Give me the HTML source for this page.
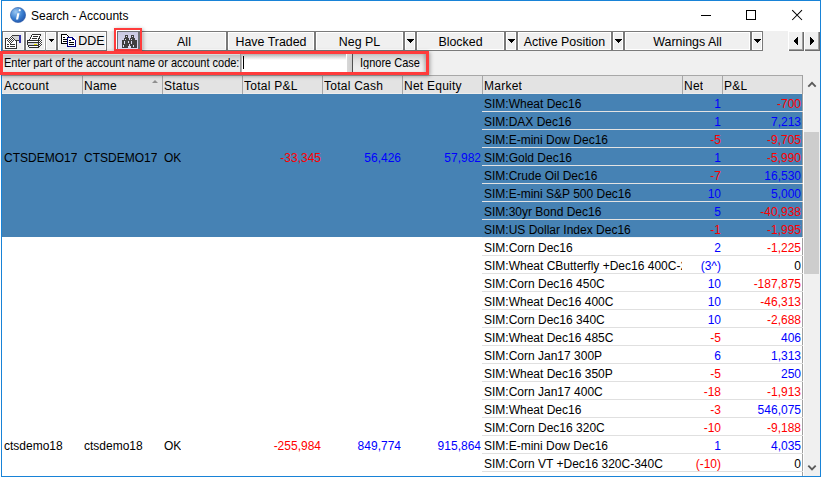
<!DOCTYPE html>
<html><head><meta charset="utf-8"><title>Search - Accounts</title>
<style>
*{margin:0;padding:0;box-sizing:border-box}
html,body{width:821px;height:477px;overflow:hidden;background:#fff;font-family:"Liberation Sans",sans-serif;font-size:12px;color:#000}
.a{position:absolute}
.sel{background:#4682b4}
.hl{left:482px;width:321px;height:1px}
.t{height:17px;line-height:17px;white-space:nowrap;overflow:hidden}
.mk{left:484px;width:198px}
.nt{left:682px;width:39px}
.pl{left:722px;width:79px}
.ra{text-align:right}
.b{color:#0000ff}
.r{color:#ff0000}
.k{color:#000}
.win{left:1px;top:0;width:820px;height:477px;border:1px solid #1883d7;background:#f0f0f0}
.title{left:2px;top:1px;width:818px;height:30px;background:#fff}
.tb{top:31px;height:20px;background:#f0f0f0;border:1px solid #7a7a7a;box-shadow:inset 0 0 0 1px #fff}
.tbt{top:33px;height:18px;line-height:18px;text-align:center;font-size:12.4px}
.arr{width:0;height:0;border-left:3.5px solid transparent;border-right:3.5px solid transparent;border-top:4px solid #000}
.arr5{width:0;height:0;border-left:2.5px solid transparent;border-right:2.5px solid transparent;border-top:3px solid #000}
.sb3{top:31px;height:20px;background:#f0f0f0;box-shadow:inset 1px 1px 0 #fff,inset -1px -1px 0 #6d6d6d,inset -2px -2px 0 #a0a0a0}
.hdr{top:75px;height:19px;background:linear-gradient(#a8a8a8 0,#a8a8a8 1px,#e3e3e3 1px,#e3e3e3 18px,#ededed 18px)}
.hs{top:76px;width:1px;height:18px;background:#a6a6a6}
.ht{top:78px;height:15px;line-height:17px;letter-spacing:0.25px;white-space:nowrap;overflow:hidden}

</style></head><body>
<div class="a win"></div>
<div class="a title"></div>
<!-- title icon -->
<svg class="a" style="left:10px;top:7px" width="16" height="16" viewBox="0 0 16 16">
<defs><radialGradient id="ig" cx="0.35" cy="0.3" r="0.8"><stop offset="0" stop-color="#9cc8f2"/><stop offset="0.55" stop-color="#3a7fd0"/><stop offset="1" stop-color="#1f4fa6"/></radialGradient></defs>
<circle cx="8" cy="8" r="7.6" fill="url(#ig)" stroke="#2a5aa8" stroke-width="0.6"/>
<path d="M8.6 3.2a1.1 1.1 0 1 1 0 .01z" fill="#fff"/>
<path d="M7.3 6.2h2.2l-1.4 6.4h-2.1z" fill="#fff"/>
</svg>
<div class="a" style="left:31px;top:8px;height:16px;line-height:16px;font-size:12px;color:#000">Search - Accounts</div>
<!-- caption buttons -->
<div class="a" style="left:701px;top:15px;width:10px;height:1px;background:#000"></div>
<div class="a" style="left:746px;top:10px;width:10px;height:10px;border:1px solid #000"></div>
<svg class="a" style="left:791px;top:9px" width="13" height="13" viewBox="0 0 13 13"><path d="M1.2 1.2L11 11M11 1.2L1.2 11" stroke="#000" stroke-width="1.05"/></svg>

<div class="a tb" style="left:2px;width:23px"></div>
<svg class="a" style="left:2px;top:31px" width="24" height="20" viewBox="0 0 24 20" shape-rendering="crispEdges">
<defs><pattern id="ck" width="2" height="2" patternUnits="userSpaceOnUse"><rect width="2" height="2" fill="#fff"/><rect width="1" height="1" fill="#3a3a3a"/><rect x="1" y="1" width="1" height="1" fill="#3a3a3a"/></pattern></defs>
<rect x="3" y="7" width="12" height="11" fill="#333"/>
<rect x="4" y="8" width="10" height="9" fill="#fff"/>
<rect x="5" y="13" width="2" height="1" fill="#333"/><rect x="8" y="13" width="5" height="1" fill="#333"/>
<rect x="5" y="15" width="2" height="1" fill="#333"/><rect x="8" y="15" width="5" height="1" fill="#333"/>
<rect x="10" y="4" width="7" height="6" fill="#3a3a3a"/>
<rect x="10" y="5" width="7" height="4" fill="#d4d4d4"/>
<polygon points="4,10 9,4 13,9 9,13" fill="url(#ck)"/>
<rect x="17" y="4" width="2" height="8" fill="#3434a8"/>
</svg>
<div class="a tb" style="left:25px;width:21px"></div>
<div class="a tb" style="left:45px;width:12px;border-left-color:#999"></div>
<svg class="a" style="left:25px;top:32px" width="20" height="18" viewBox="0 0 20 18" shape-rendering="crispEdges">
<polygon points="7,3 15,3 13,8 4,8" fill="#fff"/>
<rect x="3" y="9" width="10" height="1" fill="#fff"/>
<rect x="3" y="11" width="10" height="2" fill="#d6d6dc"/>
<rect x="4" y="14" width="9" height="1" fill="#fff"/>
<polygon points="14,5 17,8 17,13 14,15" fill="url(#ck)"/>
<g fill="#2e2e2e">
<rect x="7" y="2" width="9" height="1"/>
<rect x="6" y="3" width="1" height="2"/><rect x="15" y="3" width="1" height="1"/>
<rect x="14" y="4" width="1" height="2"/>
<rect x="5" y="5" width="1" height="2"/><rect x="13" y="6" width="1" height="2"/>
<rect x="4" y="7" width="1" height="1"/>
<rect x="8" y="4" width="5" height="1"/><rect x="7" y="6" width="5" height="1"/>
<rect x="2" y="8" width="12" height="1"/>
<rect x="2" y="9" width="1" height="2"/><rect x="13" y="9" width="1" height="1"/>
<rect x="2" y="10" width="12" height="1"/>
<rect x="2" y="11" width="1" height="2"/><rect x="13" y="11" width="1" height="2"/>
<rect x="3" y="13" width="11" height="1"/>
<rect x="3" y="14" width="1" height="1"/><rect x="13" y="14" width="2" height="1"/>
<rect x="4" y="15" width="10" height="1"/>
</g>
<rect x="9" y="12" width="3" height="1" fill="#eee600"/>
</svg>
<svg class="a" style="left:49px;top:39px" width="5" height="3" shape-rendering="crispEdges"><rect x="0" y="0" width="5" height="1"/><rect x="1" y="1" width="3" height="1"/><rect x="2" y="2" width="1" height="1"/></svg>
<div class="a tb" style="left:57px;width:50px"></div>
<svg class="a" style="left:58px;top:32px" width="20" height="18" viewBox="0 0 20 18" shape-rendering="crispEdges">
<rect x="3" y="2" width="7" height="10" fill="#fff"/>
<g fill="#000">
<rect x="3" y="2" width="6" height="1"/><rect x="3" y="2" width="1" height="10"/><rect x="3" y="11" width="7" height="1"/>
<rect x="9" y="3" width="1" height="1"/><rect x="10" y="4" width="1" height="8"/>
<rect x="5" y="5" width="2" height="1"/><rect x="5" y="7" width="4" height="1"/><rect x="5" y="9" width="4" height="1"/>
</g>
<rect x="9" y="5" width="9" height="10" fill="#fff"/>
<g fill="#000080">
<rect x="9" y="5" width="6" height="1"/><rect x="9" y="5" width="1" height="10"/><rect x="9" y="14" width="9" height="1"/>
<rect x="15" y="6" width="1" height="1"/><rect x="16" y="7" width="1" height="1"/><rect x="17" y="8" width="1" height="7"/>
<rect x="14" y="5" width="1" height="3"/><rect x="14" y="7" width="3" height="1"/>
</g>
<g fill="#000">
<rect x="11" y="8" width="2" height="1"/><rect x="11" y="10" width="5" height="1"/><rect x="11" y="12" width="5" height="1"/>
</g>
</svg>
<div class="a tbt" style="left:78px;top:32px;width:27px;font-size:12.5px">DDE</div>

<!-- binoculars -->
<div class="a" style="left:116px;top:30px;width:24px;height:19px;background:#fff"></div>
<div class="a" style="left:117px;top:31px;width:23px;height:18px;background:linear-gradient(#c9c9e2,#dcdcf2);border:1px solid #6b7075;border-right-width:2px;border-bottom:none"></div>
<svg class="a" style="left:119px;top:32px" width="20" height="18" viewBox="0 0 20 18" shape-rendering="crispEdges">
<g fill="#404040">
<rect x="6" y="3" width="3" height="3"/><rect x="12" y="3" width="3" height="3"/>
<rect x="5" y="6" width="5" height="2"/><rect x="11" y="6" width="5" height="2"/>
<rect x="3" y="8" width="8" height="8"/><rect x="11" y="8" width="7" height="8"/>
</g>
<g fill="#dcdcf0">
<rect x="7" y="4" width="1" height="1"/><rect x="13" y="4" width="1" height="1"/>
<rect x="6" y="7" width="1" height="1"/><rect x="12" y="7" width="1" height="1"/>
<rect x="5" y="9" width="1" height="3"/><rect x="9" y="9" width="1" height="2"/><rect x="12" y="9" width="1" height="3"/>
<rect x="4" y="13" width="1" height="2"/><rect x="14" y="13" width="1" height="2"/>
<rect x="10" y="12" width="1" height="4"/><rect x="9" y="14" width="3" height="2"/>
</g>
</svg>

<div class="a tb" style="left:141px;width:86px"></div>
<div class="a tbt" style="left:142px;width:84px">All</div>
<div class="a tb" style="left:227px;width:88px"></div>
<div class="a tbt" style="left:228px;width:86px">Have Traded</div>
<div class="a tb" style="left:315px;width:89px"></div>
<div class="a tbt" style="left:316px;width:87px">Neg PL</div>
<div class="a tb" style="left:404px;width:12px"></div>
<svg class="a" style="left:407px;top:39px" width="7" height="4" shape-rendering="crispEdges"><rect x="0" y="0" width="7" height="1"/><rect x="1" y="1" width="5" height="1"/><rect x="2" y="2" width="3" height="1"/><rect x="3" y="3" width="1" height="1"/></svg>
<div class="a tb" style="left:416px;width:89px"></div>
<div class="a tbt" style="left:417px;width:87px">Blocked</div>
<div class="a tb" style="left:505px;width:12px"></div>
<svg class="a" style="left:508px;top:39px" width="7" height="4" shape-rendering="crispEdges"><rect x="0" y="0" width="7" height="1"/><rect x="1" y="1" width="5" height="1"/><rect x="2" y="2" width="3" height="1"/><rect x="3" y="3" width="1" height="1"/></svg>
<div class="a tb" style="left:517px;width:95px"></div>
<div class="a tbt" style="left:518px;width:93px">Active Position</div>
<div class="a tb" style="left:612px;width:12px"></div>
<svg class="a" style="left:615px;top:39px" width="7" height="4" shape-rendering="crispEdges"><rect x="0" y="0" width="7" height="1"/><rect x="1" y="1" width="5" height="1"/><rect x="2" y="2" width="3" height="1"/><rect x="3" y="3" width="1" height="1"/></svg>
<div class="a tb" style="left:624px;width:127px"></div>
<div class="a tbt" style="left:625px;width:125px">Warnings All</div>
<div class="a tb" style="left:751px;width:12px"></div>
<svg class="a" style="left:754px;top:39px" width="7" height="4" shape-rendering="crispEdges"><rect x="0" y="0" width="7" height="1"/><rect x="1" y="1" width="5" height="1"/><rect x="2" y="2" width="3" height="1"/><rect x="3" y="3" width="1" height="1"/></svg>
<!-- scroll arrows -->
<div class="a sb3" style="left:788px;width:16px"></div>
<div class="a sb3" style="left:804px;width:16px"></div>
<svg class="a" style="left:793px;top:37px" width="5" height="8" shape-rendering="crispEdges"><rect x="4" y="0" width="1" height="8"/><rect x="3" y="1" width="1" height="6"/><rect x="2" y="2" width="1" height="4"/><rect x="1" y="3" width="1" height="2"/></svg>
<svg class="a" style="left:810px;top:37px" width="5" height="8" shape-rendering="crispEdges"><rect x="0" y="0" width="1" height="8"/><rect x="1" y="1" width="1" height="6"/><rect x="2" y="2" width="1" height="4"/><rect x="3" y="3" width="1" height="2"/></svg>
<div class="a" style="left:114px;top:28px;width:28px;height:23px;border:2px solid #ff3b3b;box-shadow:1px 1px 4px rgba(0,0,0,0.35)"></div>

<!-- search bar -->
<div class="a" style="left:3px;top:54px;width:238px;height:18px;background:linear-gradient(#d6dada 0,#d6dada 1px,#c0c0c0 1px,#dedede 6px,#e9e9e9 10px,#eeeeee 16px,#e2e8e8 17px)"></div>
<div class="a" style="left:4px;top:52px;height:18px;line-height:18px;font-size:11px;transform:scaleY(1.13);transform-origin:0 0">Enter part of the account name or account code:</div>
<div class="a" style="left:240px;top:54px;width:2px;height:18px;background:linear-gradient(90deg,#8a8a8a,#c4c4c4)"></div>
<div class="a" style="left:242px;top:54px;width:104px;height:18px;background:linear-gradient(#b0b0b0,#dcdcdc 3px,#fff 6px)"></div>
<div class="a" style="left:243px;top:56px;width:1px;height:13px;background:#000"></div>
<div class="a" style="left:346px;top:54px;width:6px;height:18px;background:linear-gradient(90deg,#fff 0,#fff 1px,#d8d8d8 1px,#d0d0d0 5px)"></div>
<div class="a" style="left:352px;top:54px;width:1px;height:18px;background:#505050"></div>
<div class="a" style="left:353px;top:54px;width:73px;height:18px;background:linear-gradient(#c8c8c8,#e2e2e2 6px,#ececec 12px,#f0f0f0);box-shadow:inset -3px 0 3px -1px rgba(0,0,0,0.2)"></div>
<div class="a" style="left:360px;top:52px;height:18px;line-height:18px;font-size:11px;transform:scaleY(1.13);transform-origin:0 0">Ignore Case</div>

<!-- header -->
<div class="a hdr" style="left:2px;width:801px"></div>
<div class="a" style="left:802px;top:75px;width:1px;height:19px;background:#a0a0a0"></div>
<div class="a hs" style="left:82px"></div>
<div class="a hs" style="left:162px"></div>
<div class="a hs" style="left:242px"></div>
<div class="a hs" style="left:322px"></div>
<div class="a hs" style="left:402px"></div>
<div class="a hs" style="left:482px"></div>
<div class="a hs" style="left:682px"></div>
<div class="a hs" style="left:722px"></div>
<div class="a ht" style="left:4px">Account</div>
<div class="a ht" style="left:84px">Name</div>
<div class="a" style="left:152px;top:80px;width:0;height:0;border-left:3px solid transparent;border-right:3px solid transparent;border-bottom:3px solid #8f8f8f"></div>
<div class="a ht" style="left:164px">Status</div>
<div class="a ht" style="left:244px">Total P&amp;L</div>
<div class="a ht" style="left:324px">Total Cash</div>
<div class="a ht" style="left:404px;height:17px">Net Equity</div>
<div class="a ht" style="left:484px">Market</div>
<div class="a ht" style="left:684px">Net</div>
<div class="a ht" style="left:724px">P&amp;L</div>

<!-- grid body -->
<div class="a" style="left:2px;top:94px;width:800px;height:382px;background:#fff"></div>
<div class="a" style="left:802px;top:94px;width:1px;height:382px;background:#a0a0a0"></div>
<!-- scrollbar -->
<div class="a" style="left:803px;top:75px;width:16px;height:401px;background:#f0f0f0"></div>
<svg class="a" style="left:807px;top:80px" width="10" height="8" viewBox="0 0 10 8"><path d="M1.3 6.6L5 2.9L8.7 6.6" fill="none" stroke="#5a5a5a" stroke-width="1.9"/></svg>
<div class="a" style="left:804px;top:132px;width:15px;height:142px;background:#cdcdcd"></div>
<div class="a" style="left:803px;top:94px;width:1px;height:382px;background:#fff"></div>
<svg class="a" style="left:807px;top:464px" width="10" height="8" viewBox="0 0 10 8"><path d="M1.3 1.6L5 5.3L8.7 1.6" fill="none" stroke="#5a5a5a" stroke-width="1.9"/></svg>

<div class="a" style="left:0;top:51px;width:429px;height:24px;border:3px solid #ff3b3b;box-shadow:1px 1px 4px rgba(0,0,0,0.35)"></div>

<div class="a" id="grid" style="left:0;top:0;width:821px;height:476px;overflow:hidden">
<div class="a sel" style="left:2px;top:94px;width:800px;height:143px"></div>
<div class="a hl" style="top:111px;background:#e3e3e3"></div>
<div class="a t mk" style="top:96px">SIM:Wheat Dec16</div>
<div class="a t ra b nt" style="top:96px">1</div>
<div class="a t ra r pl" style="top:96px">-700</div>
<div class="a hl" style="top:129px;background:#e3e3e3"></div>
<div class="a t mk" style="top:114px">SIM:DAX Dec16</div>
<div class="a t ra b nt" style="top:114px">1</div>
<div class="a t ra b pl" style="top:114px">7,213</div>
<div class="a hl" style="top:147px;background:#e3e3e3"></div>
<div class="a t mk" style="top:132px">SIM:E-mini Dow Dec16</div>
<div class="a t ra r nt" style="top:132px">-5</div>
<div class="a t ra r pl" style="top:132px">-9,705</div>
<div class="a hl" style="top:165px;background:#e3e3e3"></div>
<div class="a t mk" style="top:150px">SIM:Gold Dec16</div>
<div class="a t ra b nt" style="top:150px">1</div>
<div class="a t ra r pl" style="top:150px">-5,990</div>
<div class="a hl" style="top:183px;background:#e3e3e3"></div>
<div class="a t mk" style="top:168px">SIM:Crude Oil Dec16</div>
<div class="a t ra r nt" style="top:168px">-7</div>
<div class="a t ra b pl" style="top:168px">16,530</div>
<div class="a hl" style="top:201px;background:#e3e3e3"></div>
<div class="a t mk" style="top:186px">SIM:E-mini S&amp;P 500 Dec16</div>
<div class="a t ra b nt" style="top:186px">10</div>
<div class="a t ra b pl" style="top:186px">5,000</div>
<div class="a hl" style="top:219px;background:#e3e3e3"></div>
<div class="a t mk" style="top:204px">SIM:30yr Bond Dec16</div>
<div class="a t ra b nt" style="top:204px">5</div>
<div class="a t ra r pl" style="top:204px">-40,938</div>
<div class="a hl" style="top:237px;background:#f4f4f4"></div>
<div class="a t mk" style="top:222px">SIM:US Dollar Index Dec16</div>
<div class="a t ra r nt" style="top:222px">-1</div>
<div class="a t ra r pl" style="top:222px">-1,995</div>
<div class="a hl" style="top:255px;background:#e0e0e0"></div>
<div class="a t mk" style="top:240px">SIM:Corn Dec16</div>
<div class="a t ra b nt" style="top:240px">2</div>
<div class="a t ra r pl" style="top:240px">-1,225</div>
<div class="a hl" style="top:273px;background:#e0e0e0"></div>
<div class="a t mk" style="top:258px">SIM:Wheat CButterfly +Dec16 400C-2</div>
<div class="a t ra b nt" style="top:258px">(3^)</div>
<div class="a t ra k pl" style="top:258px">0</div>
<div class="a hl" style="top:291px;background:#e0e0e0"></div>
<div class="a t mk" style="top:276px">SIM:Corn Dec16 450C</div>
<div class="a t ra b nt" style="top:276px">10</div>
<div class="a t ra r pl" style="top:276px">-187,875</div>
<div class="a hl" style="top:309px;background:#e0e0e0"></div>
<div class="a t mk" style="top:294px">SIM:Wheat Dec16 400C</div>
<div class="a t ra b nt" style="top:294px">10</div>
<div class="a t ra r pl" style="top:294px">-46,313</div>
<div class="a hl" style="top:327px;background:#e0e0e0"></div>
<div class="a t mk" style="top:312px">SIM:Corn Dec16 340C</div>
<div class="a t ra b nt" style="top:312px">10</div>
<div class="a t ra r pl" style="top:312px">-2,688</div>
<div class="a hl" style="top:345px;background:#e0e0e0"></div>
<div class="a t mk" style="top:330px">SIM:Wheat Dec16 485C</div>
<div class="a t ra r nt" style="top:330px">-5</div>
<div class="a t ra b pl" style="top:330px">406</div>
<div class="a hl" style="top:363px;background:#e0e0e0"></div>
<div class="a t mk" style="top:348px">SIM:Corn Jan17 300P</div>
<div class="a t ra b nt" style="top:348px">6</div>
<div class="a t ra b pl" style="top:348px">1,313</div>
<div class="a hl" style="top:381px;background:#e0e0e0"></div>
<div class="a t mk" style="top:366px">SIM:Wheat Dec16 350P</div>
<div class="a t ra r nt" style="top:366px">-5</div>
<div class="a t ra b pl" style="top:366px">250</div>
<div class="a hl" style="top:399px;background:#e0e0e0"></div>
<div class="a t mk" style="top:384px">SIM:Corn Jan17 400C</div>
<div class="a t ra r nt" style="top:384px">-18</div>
<div class="a t ra r pl" style="top:384px">-1,913</div>
<div class="a hl" style="top:417px;background:#e0e0e0"></div>
<div class="a t mk" style="top:402px">SIM:Wheat Dec16</div>
<div class="a t ra r nt" style="top:402px">-3</div>
<div class="a t ra b pl" style="top:402px">546,075</div>
<div class="a hl" style="top:435px;background:#e0e0e0"></div>
<div class="a t mk" style="top:420px">SIM:Corn Dec16 320C</div>
<div class="a t ra r nt" style="top:420px">-10</div>
<div class="a t ra r pl" style="top:420px">-9,188</div>
<div class="a hl" style="top:453px;background:#e0e0e0"></div>
<div class="a t mk" style="top:438px">SIM:E-mini Dow Dec16</div>
<div class="a t ra b nt" style="top:438px">1</div>
<div class="a t ra b pl" style="top:438px">4,035</div>
<div class="a hl" style="top:471px;background:#e0e0e0"></div>
<div class="a t mk" style="top:456px">SIM:Corn VT +Dec16 320C-340C</div>
<div class="a t ra r nt" style="top:456px">(-10)</div>
<div class="a t ra k pl" style="top:456px">0</div>
<div class="a t" style="top:150px;left:4px">CTSDEMO17</div>
<div class="a t" style="top:150px;left:84px">CTSDEMO17</div>
<div class="a t" style="top:150px;left:164px">OK</div>
<div class="a t ra" style="top:150px;left:242px;width:79px;color:#f00">-33,345</div>
<div class="a t ra" style="top:150px;left:322px;width:79px;color:#00f">56,426</div>
<div class="a t ra" style="top:150px;left:402px;width:79px;color:#00f">57,982</div>
<div class="a t" style="top:438px;left:4px">ctsdemo18</div>
<div class="a t" style="top:438px;left:84px">ctsdemo18</div>
<div class="a t" style="top:438px;left:164px">OK</div>
<div class="a t ra" style="top:438px;left:242px;width:79px;color:#f00">-255,984</div>
<div class="a t ra" style="top:438px;left:322px;width:79px;color:#00f">849,774</div>
<div class="a t ra" style="top:438px;left:402px;width:79px;color:#00f">915,864</div>
</div>
</body></html>
